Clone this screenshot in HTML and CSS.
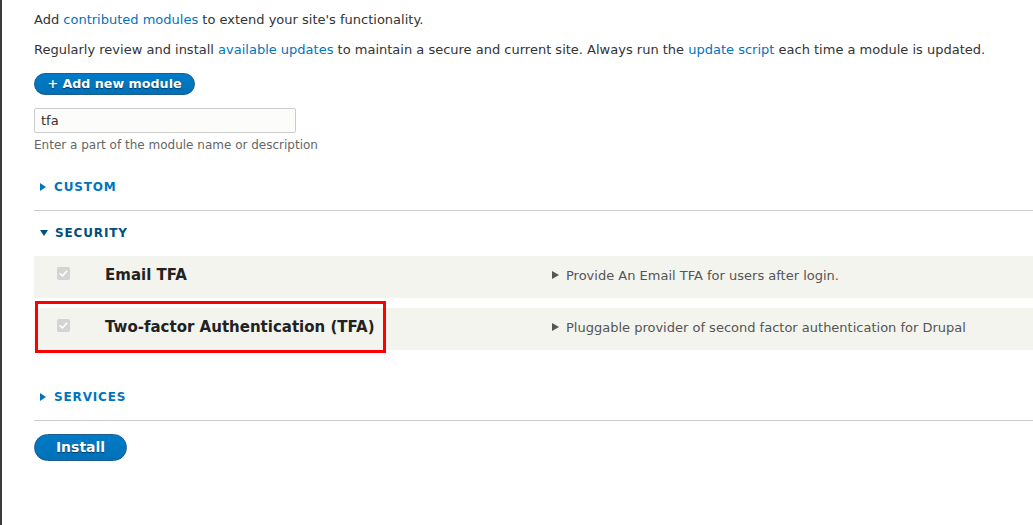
FILE: index.html
```html
<!DOCTYPE html>
<html>
<head>
<meta charset="utf-8">
<link rel="stylesheet" href="styles.css">
</head>
<body>
<div class="page">
  <p class="intro">Add <a href="#">contributed modules</a> to extend your site's functionality.</p>
  <p class="intro">Regularly review and install <a href="#">available updates</a> to maintain a secure and current site. Always run the <a href="#">update script</a> each time a module is updated.</p>
  <a class="btn btn-small" href="#">+ Add new module</a>
  <div class="filter">
    <input class="filter-input" type="text" value="tfa">
    <div class="filter-desc">Enter a part of the module name or description</div>
  </div>

  <div class="pkg closed">
    <div class="pkg-summary"><span class="tri tri-right"></span>Custom</div>
  </div>

  <div class="pkg open">
    <div class="pkg-summary"><span class="tri tri-down"></span>Security</div>
    <div class="rows">
      <div class="mrow">
        <div class="cell-check"><span class="cbox"><svg viewBox="0 0 13 13" width="13" height="13"><path d="M3.2 6.8 L5.5 9 L9.8 4" fill="none" stroke="#fff" stroke-width="1.6" stroke-linecap="round" stroke-linejoin="round"/></svg></span></div>
        <div class="cell-name">Email TFA</div>
        <div class="cell-desc"><span class="dtri"></span>Provide An Email TFA for users after login.</div>
      </div>
      <div class="mrow">
        <div class="cell-check"><span class="cbox"><svg viewBox="0 0 13 13" width="13" height="13"><path d="M3.2 6.8 L5.5 9 L9.8 4" fill="none" stroke="#fff" stroke-width="1.6" stroke-linecap="round" stroke-linejoin="round"/></svg></span></div>
        <div class="cell-name">Two-factor Authentication (TFA)</div>
        <div class="cell-desc"><span class="dtri"></span>Pluggable provider of second factor authentication for Drupal</div>
      </div>
    </div>
  </div>

  <div class="pkg closed">
    <div class="pkg-summary"><span class="tri tri-right"></span>Services</div>
  </div>

  <a class="btn btn-install" href="#">Install</a>

  <div class="highlight"></div>
</div>
</body>
</html>
```
FILE: styles.css
```css
html, body {
  margin: 0;
  padding: 0;
  background: #fff;
}
body {
  font-family: "DejaVu Sans", "Liberation Sans", sans-serif;
  color: #333;
  font-size: 13px;
}
.page {
  position: relative;
  min-height: 525px;
  box-sizing: border-box;
  border-left: 2px solid #3a3a3a;
  padding: 10px 0 0 32px;
}
.intro {
  margin: 0 0 10px;
  line-height: 20px;
  color: #333;
}
.intro a {
  color: #0074bd;
  text-decoration: none;
}
.btn {
  display: inline-block;
  box-sizing: border-box;
  color: #fff;
  font-weight: bold;
  text-decoration: none;
  border: 1px solid #1e5c90;
  border-radius: 20em;
  background: linear-gradient(to bottom, #007bc6, #0071b8);
  text-shadow: 0 1px 1px rgba(0,0,0,0.5);
  text-align: center;
}
.btn-small {
  margin-top: 3px;
  height: 22px;
  line-height: 20px;
  width: 161px;
  font-size: 12.7px;
}
.filter {
  margin-top: 13px;
}
.filter-input {
  display: block;
  box-sizing: border-box;
  width: 262px;
  height: 25px;
  margin: 0;
  padding: 0 6px;
  border: 1px solid #ccc;
  border-radius: 2px;
  background: #fcfcfa;
  font-family: "DejaVu Sans", "Liberation Sans", sans-serif;
  font-size: 13px;
  color: #333;
}
.filter-desc {
  margin-top: 4px;
  line-height: 16px;
  font-size: 12px;
  color: #666;
}
.pkg.closed {
  border-bottom: 1px solid #ccc;
}
.filter + .pkg {
  margin-top: 12px;
}
.pkg-summary {
  display: flex;
  align-items: center;
  padding: 12px 0 13px 6px;
  line-height: 20px;
  font-size: 12px;
  font-weight: bold;
  text-transform: uppercase;
  letter-spacing: 0.85px;
  color: #0074bd;
}
.open .pkg-summary {
  color: #004f80;
}
.tri {
  display: inline-block;
  width: 0;
  height: 0;
  margin-right: 8px;
}
.tri-right {
  border-top: 4px solid transparent;
  border-bottom: 4px solid transparent;
  border-left: 6px solid #0074bd;
}
.tri-down {
  border-left: 4px solid transparent;
  border-right: 4px solid transparent;
  border-top: 6px solid #004f80;
  margin-right: 7px;
}
.rows {
  display: flex;
  flex-direction: column;
  gap: 10px;
  padding-bottom: 25px;
}
.mrow {
  display: grid;
  grid-template-columns: 71px 447px 1fr;
  align-items: center;
  box-sizing: border-box;
  height: 42px;
  padding-bottom: 4px;
  background: #f3f4ee;
}
.cell-check {
  padding-left: 23px;
  display: flex;
  align-items: center;
  margin-top: -3px;
}
.cbox {
  display: block;
  width: 13px;
  height: 13px;
  border-radius: 2px;
  background: #d4d4d2;
}
.cbox svg {
  display: block;
}
.cell-name {
  font-size: 15px;
  font-weight: bold;
  color: #222;
}
.cell-desc {
  display: flex;
  align-items: center;
  font-size: 13px;
  color: #555;
  white-space: nowrap;
}
.dtri {
  display: inline-block;
  width: 0;
  height: 0;
  border-top: 4px solid transparent;
  border-bottom: 4px solid transparent;
  border-left: 7px solid #555;
  margin-right: 7px;
}
.btn-install {
  margin-top: 13px;
  height: 27px;
  line-height: 25px;
  width: 93px;
  font-size: 14px;
}
.highlight {
  position: absolute;
  left: 33px;
  top: 301px;
  width: 351px;
  height: 52px;
  box-sizing: border-box;
  border: 3px solid #f00;
}
```
